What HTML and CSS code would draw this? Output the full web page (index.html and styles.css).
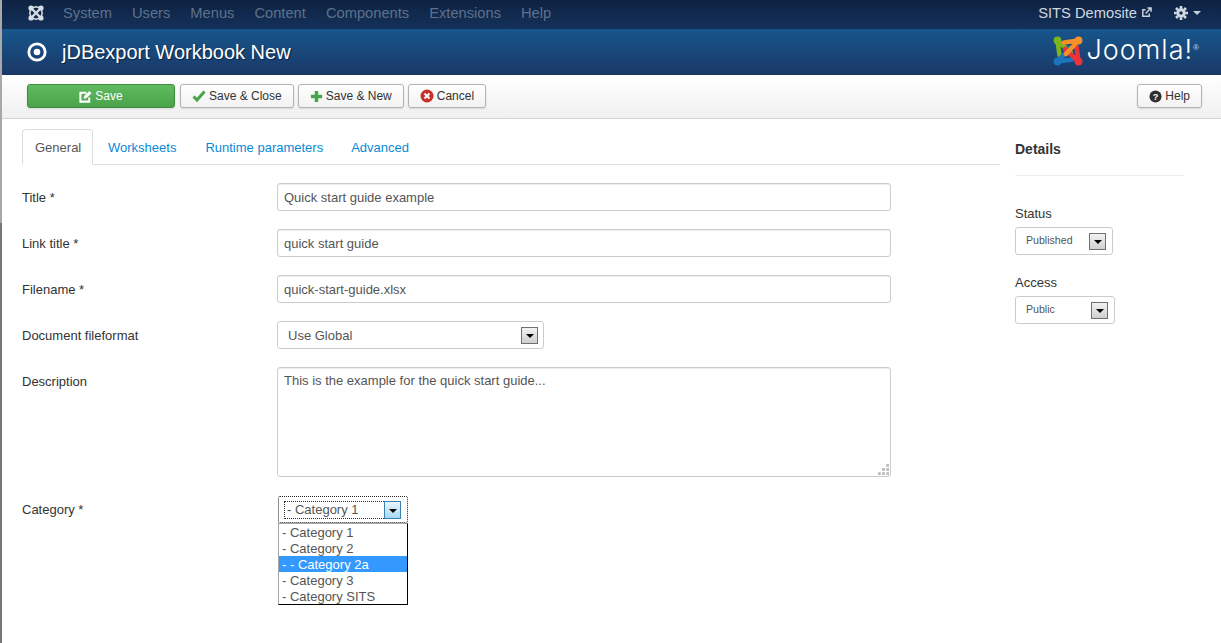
FILE: index.html
```html
<!DOCTYPE html>
<html lang="en">
<head>
<meta charset="utf-8">
<title>jDBexport Workbook New</title>
<link rel="stylesheet" href="styles.css">
</head>
<body>
<nav class="navbar">
  <svg class="nav-logo" viewBox="0 0 16 16" width="16" height="16"><g fill="#d9dee5"><circle cx="3" cy="3" r="2.600"/><circle cx="13" cy="3" r="2.600"/><circle cx="3" cy="13" r="2.600"/><circle cx="13" cy="13" r="2.600"/></g><g fill="none" stroke="#d9dee5"><path d="M3 3 L13 13M13 3 L3 13" stroke-width="2.400"/><path d="M3 3 L8 1.800 L13 3 L14.200 8 L13 13 L8 14.200 L3 13 L1.800 8 Z" stroke-width="1.500"/></g></svg>
  <ul class="menu">
    <li>System</li><li>Users</li><li>Menus</li><li>Content</li><li>Components</li><li>Extensions</li><li>Help</li>
  </ul>
  <div class="nav-right">
    <span class="site">SITS Demosite</span>
    <svg class="ext" viewBox="0 0 12 12" width="11" height="11"><path d="M9 7v3H2V3h3" fill="none" stroke="#c8d2de" stroke-width="1.600"/><path d="M5 7 L10 2M7 1.200h4v4" fill="none" stroke="#c8d2de" stroke-width="1.600"/></svg>
    <svg class="gear" viewBox="0 0 16 16" width="14" height="14"><circle cx="8" cy="8" r="3.700" fill="none" stroke="#d5dbe3" stroke-width="3.400"/><g stroke="#d5dbe3" stroke-width="3"><path d="M8 0v3M8 13v3M0 8h3M13 8h3M2.300 2.300l2.100 2.100M11.600 11.600l2.100 2.100M13.700 2.300l-2.100 2.100M4.400 11.600l-2.100 2.100"/></g></svg>
    <span class="caret"></span>
  </div>
</nav>
<header class="titlebar">
  <svg class="target" viewBox="0 0 20 20" width="20" height="20"><circle cx="10" cy="10" r="8.200" fill="none" stroke="#fff" stroke-width="2.800"/><circle cx="10" cy="10" r="3.300" fill="#fff"/></svg>
  <h1>jDBexport Workbook New</h1>
  <div class="brand">
    <svg viewBox="0 0 30 30" width="30" height="30" class="brand-mark">
      <g fill="none" stroke-width="4.600" stroke-linecap="round" stroke-linejoin="round">
        <g stroke="#7ab51d"><path d="M6.500 19 L4.500 4.500 L18 17"/><circle cx="4.500" cy="4.500" r="1.600" fill="#7ab51d"/></g>
        <g stroke="#1c75bc" transform="rotate(-90 15 15)"><path d="M6.500 19 L4.500 4.500 L18 17"/><circle cx="4.500" cy="4.500" r="1.600" fill="#1c75bc"/></g>
        <g stroke="#ee3338" transform="rotate(180 15 15)"><path d="M6.500 19 L4.500 4.500 L18 17"/><circle cx="4.500" cy="4.500" r="1.600" fill="#ee3338"/></g>
        <g stroke="#f5902a" transform="rotate(90 15 15)"><path d="M6.500 19 L4.500 4.500 L18 17"/><circle cx="4.500" cy="4.500" r="1.600" fill="#f5902a"/></g>
      </g>
    </svg>
    <span class="brand-name">Joomla!</span><span class="reg">®</span>
  </div>
</header>
<div class="toolbar">
  <button class="btn btn-save">
    <svg viewBox="0 0 14 14" width="13" height="13"><path d="M11 8v4.500H1.500V3H8" fill="none" stroke="#fff" stroke-width="2.200"/><path d="M5 9.500l.5-3L11 1l2.500 2.500L8 9z" fill="#fff"/></svg>
    Save</button>
  <button class="btn">
    <svg viewBox="0 0 14 14" width="14" height="14"><path d="M1.500 7.500l3.500 3.500 7.500-8.500" fill="none" stroke="#46a546" stroke-width="3"/></svg>
    Save &amp; Close</button>
  <button class="btn">
    <svg viewBox="0 0 14 14" width="13" height="13"><path d="M7 1v12M1 7h12" stroke="#46a546" stroke-width="3.800"/></svg>
    Save &amp; New</button>
  <button class="btn">
    <svg viewBox="0 0 14 14" width="14" height="14"><circle cx="7" cy="7" r="6.500" fill="#c9302c"/><path d="M4.500 4.500l5 5M9.500 4.500l-5 5" stroke="#fff" stroke-width="2"/></svg>
    Cancel</button>
  <button class="btn btn-help">
    <svg viewBox="0 0 14 14" width="13" height="13"><circle cx="7" cy="7" r="6.500" fill="#2f2f2f"/><text x="7" y="10.600" text-anchor="middle" class="q">?</text></svg>
    Help</button>
</div>
<main class="content">
  <section class="form-col">
    <div class="tabs">
      <span class="tab active">General</span>
      <span class="tab tab-wide">Worksheets</span>
      <span class="tab">Runtime parameters</span>
      <span class="tab">Advanced</span>
    </div>
    <div class="row"><label>Title *</label><div class="input">Quick start guide example</div></div>
    <div class="row"><label>Link title *</label><div class="input">quick start guide</div></div>
    <div class="row"><label>Filename *</label><div class="input">quick-start-guide.xlsx</div></div>
    <div class="row"><label>Document fileformat</label>
      <div class="select select-wide"><span>Use Global</span><span class="arrow"></span></div>
    </div>
    <div class="row row-area"><label>Description</label>
      <div class="input textarea">This is the example for the quick start guide...
        <svg class="grip" viewBox="0 0 12 12" width="12" height="12"><g fill="#bbb"><rect x="9" y="0" width="3" height="3"/><rect x="4.500" y="4.500" width="3" height="3"/><rect x="9" y="4.500" width="3" height="3"/><rect x="0" y="9" width="3" height="3"/><rect x="4.500" y="9" width="3" height="3"/><rect x="9" y="9" width="3" height="3"/></g></svg>
      </div>
    </div>
    <div class="row row-cat"><label>Category *</label>
      <div class="combo">
        <div class="combo-box">
          <span class="combo-value">- Category 1</span>
          <span class="arrow arrow-focus"></span>
        </div>
        <ul class="listbox">
          <li>- Category 1</li>
          <li>- Category 2</li>
          <li class="sel">- - Category 2a</li>
          <li>- Category 3</li>
          <li>- Category SITS</li>
        </ul>
      </div>
    </div>
  </section>
  <aside class="side">
    <h4>Details</h4>
    <hr>
    <div class="side-label side-status">Status</div>
    <div class="select select-status"><span>Published</span><span class="arrow"></span></div>
    <div class="side-label side-access">Access</div>
    <div class="select select-access"><span>Public</span><span class="arrow"></span></div>
  </aside>
</main>
</body>
</html>
```
FILE: styles.css
```css
* { box-sizing: border-box; }
html, body { margin: 0; height: 100%; }
body {
  font-family: "Liberation Sans", Arial, sans-serif;
  font-size: 13px;
  color: #333;
  background: #fff;
  border-left: 2px solid #8a8a8a;
  border-image: linear-gradient(#a8a8a8 0, #a8a8a8 224px, #777 224px, #777 100%) 2;
  overflow: hidden;
}
.navbar {
  height: 29px;
  display: flex;
  align-items: center;
  padding: 0 20px 4px 26px;
  background: linear-gradient(#0e2342, #14305a);
}
.nav-logo { display: block; }
.menu {
  display: flex;
  list-style: none;
  margin: 0 0 0 19px;
  padding: 0;
  gap: 20px;
  font-size: 14.700px;
  color: #5e718b;
}
.nav-right { margin-left: auto; display: flex; align-items: center; color: #d0d8e2; font-size: 14.700px; }
.ext { margin-left: 4px; }
.gear { margin-left: 22px; }
.caret { margin-left: 5px; border: 4px solid transparent; border-top-color: #c8d2de; border-bottom: 0; }
.titlebar {
  height: 46px;
  display: flex;
  align-items: center;
  padding: 0 22px 0 25px;
  background: linear-gradient(#17568c, #1a3867);
}
.titlebar h1 {
  margin: 0 0 0 15px;
  font-size: 20px;
  font-weight: 400;
  color: #fff;
  text-shadow: 1px 1px 1px #0c2444;
}
.brand { margin-left: auto; display: flex; align-items: center; color: #fff; }
.brand-mark { margin-top: -3px; }
.brand-name { font-family: Inter, sans-serif; font-weight: 300; font-size: 27px; line-height: 30px; margin-left: 3px; letter-spacing: 1px; margin-top: -4px; }
.reg { font-size: 8px; align-self: flex-start; margin-top: 4px; color: #cfd8e3; }
.toolbar {
  height: 44px;
  display: flex;
  align-items: flex-start;
  gap: 4px;
  padding: 9px 19px 0 25px;
  background: linear-gradient(#fff, #f0f0f0);
  border-bottom: 1px solid #d4d4d4;
}
.btn {
  height: 24px;
  display: flex;
  align-items: center;
  justify-content: center;
  gap: 3px;
  padding: 0 11px;
  font: 12px "Liberation Sans", Arial, sans-serif;
  color: #333;
  background: linear-gradient(#fff, #f2f2f2);
  border: 1px solid #b3b3b3;
  border-radius: 3px;
  box-shadow: 0 1px 2px rgba(0,0,0,.12);
}
.btn-save {
  width: 148px;
  margin-right: 1px;
  color: #fff;
  background: linear-gradient(#5fbb5f, #4aa34a);
  border-color: #3f8b3f;
}
.btn-help { margin-left: auto; }
.q { font: bold 10px "Liberation Sans", Arial, sans-serif; fill: #fff; }
.content { display: flex; }
.form-col { width: 998px; padding: 10px 0 0 20px; }
.tabs {
  display: flex;
  height: 36px;
  border-bottom: 1px solid #ddd;
  margin-bottom: 18px;
}
.tab {
  padding: 10px 12px 0 14px;
  height: 36px;
  color: #0a8ad6;
  border: 1px solid transparent;
}
.tab-wide { padding-right: 13px; }
.tab.active {
  width: 71px;
  padding: 10px 0 0 12px;
  color: #555;
  background: #fff;
  border-color: #ddd #ddd #fff;
  border-radius: 4px 4px 0 0;
}
.row { display: flex; align-items: center; height: 28px; margin-bottom: 18px; }
.row label { width: 255px; flex: none; font-size: 13px; color: #333; }
.input {
  width: 614px;
  height: 28px;
  padding: 1px 6px 0;
  line-height: 26px;
  font-size: 13px;
  color: #555;
  border: 1px solid #ccc;
  border-radius: 3px;
  box-shadow: inset 0 1px 1px rgba(0,0,0,.07);
}
.row-area { height: 110px; align-items: flex-start; margin-bottom: 19px; }
.row-area label { margin-top: 7px; }
.textarea { height: 110px; padding-top: 0; position: relative; }
.grip { position: absolute; right: 1px; bottom: 1px; width: 11px; height: 11px; }
.select {
  display: flex;
  align-items: center;
  justify-content: space-between;
  height: 28px;
  border: 1px solid #ccc;
  border-radius: 3px;
  color: #555;
}
.select-wide { width: 267px; padding: 0 5px 0 10px; }
.arrow {
  width: 17px;
  height: 17px;
  flex: none;
  display: flex;
  align-items: center;
  justify-content: center;
  border: 1px solid #707070;
  background: linear-gradient(#f2f2f2, #cfcfcf);
}
.arrow::after {
  content: "";
  margin-top: 2px;
  border: 4px solid transparent;
  border-top: 4px solid #000;
  border-bottom: 0;
}
.row-cat { align-items: flex-start; height: auto; margin: 0; }
.row-cat label { margin-top: 6px; }
.combo { width: 130px; margin-left: 1px; }
.combo-box {
  height: 27px;
  display: flex;
  align-items: center;
  padding: 0 6px 0 5px;
  border: 1px dotted #222;
  border-radius: 2px;
}
.combo-value {
  flex: 1;
  height: 18px;
  line-height: 16px;
  padding-left: 2px;
  font-size: 13px;
  color: #555;
  border: 1px dotted #333;
  border-right: 0;
}
.arrow-focus { height: 18px; border-color: #3c7fb1; background: linear-gradient(#eaf6fd, #a7d9f5); }
.listbox {
  list-style: none;
  margin: 0;
  padding: 0;
  width: 130px;
  height: 82px;
  background: #fff;
  border: 1px solid #000;
  border-top-color: #a5a5a5;
  border-left-color: #a5a5a5;
}
.listbox li { height: 16px; line-height: 17px; padding-left: 3px; font-size: 13px; color: #555; white-space: nowrap; }
.listbox li.sel { background: #3399ff; color: #fff; }
.side { padding: 20px 0 0 15px; width: 190px; }
.side h4 { margin: 0; font-size: 14px; line-height: 20px; color: #333; }
.side hr { width: 169px; margin: 16px 0 0; border: 0; border-top: 1px solid #eee; }
.side-label { font-size: 13px; color: #333; line-height: 16px; }
.side-status { margin-top: 30px; margin-bottom: 5px; }
.side-access { margin-top: 20px; margin-bottom: 5px; }
.select-status { width: 98px; padding: 0 6px 0 10px; font-size: 10.600px; }
.select-access { width: 100px; padding: 0 6px 0 10px; font-size: 10.600px; }
.select-status span:first-child, .select-access span:first-child { margin-bottom: 2px; }
```
